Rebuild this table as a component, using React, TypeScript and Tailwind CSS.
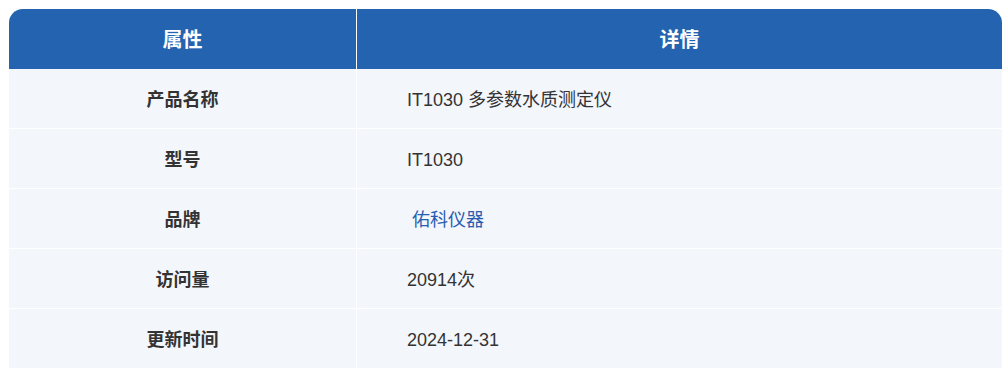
import React from "react";

const rows: { k: string; v: React.ReactNode }[] = [
  { k: "产品名称", v: "IT1030 多参数水质测定仪" },
  { k: "型号", v: "IT1030" },
  {
    k: "品牌",
    v: (
      <>
        {"\u00a0"}
        <a className="text-[#2a5db0]">佑科仪器</a>
      </>
    ),
  },
  { k: "访问量", v: "20914次" },
  { k: "更新时间", v: "2024-12-31" },
];

export default function App() {
  return (
    <div
      className="bg-white min-h-[370px] pt-[9px] pl-[9px]"
      style={{ fontFamily: '"Liberation Sans", "Noto Sans CJK SC", sans-serif' }}
    >
      <div className="w-[993px] rounded-t-[14px] overflow-hidden bg-[#f3f6fb]">
        <div className="grid grid-cols-[347px_1px_1fr] h-[60px] bg-[#2463af] text-white text-[20px] font-bold">
          <div className="flex items-center justify-center pt-[2px]">属性</div>
          <div className="bg-white" />
          <div className="flex items-center justify-center pt-[2px]">详情</div>
        </div>
        {rows.map((r) => (
          <div
            key={r.k}
            className="grid grid-cols-[347px_1px_1fr] h-[60px] border-b border-white text-[18px] text-[#333333]"
          >
            <div className="flex items-center justify-center font-bold pt-[3px]">{r.k}</div>
            <div className="bg-white" />
            <div className="flex items-center pl-[50px] pt-[3px]">{r.v}</div>
          </div>
        ))}
      </div>
    </div>
  );
}
